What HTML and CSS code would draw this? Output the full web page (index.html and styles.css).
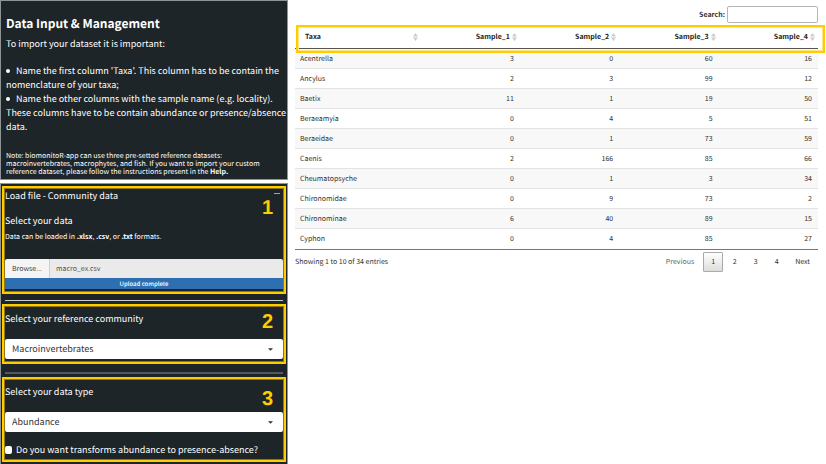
FILE: index.html
```html
<!DOCTYPE html>
<html lang="en">
<head>
<meta charset="utf-8">
<title>Data Input &amp; Management</title>
<link rel="stylesheet" href="styles.css">
</head>
<body>
<div class="page">
  <aside class="sidebar">
    <section class="box intro">
      <h1>Data Input &amp; Management</h1>
      <p class="lead">To import your dataset it is important:</p>
      <ul class="rules">
        <li>Name the first column 'Taxa'. This column has to be contain the<br>nomenclature of your taxa;</li>
        <li>Name the other columns with the sample name (e.g. locality).<br>These columns have to be contain abundance or presence/absence<br>data.</li>
      </ul>
      <p class="note">Note: biomonitoR-app can use three pre-setted reference datasets: macroinvertebrates, macrophytes, and fish. If you want to import your custom reference dataset, please follow the instructions present in the <b>Help.</b></p>
    </section>

    <form class="box steps">
      <section class="step">
        <span class="step-number">1</span>
        <div class="box-header">
          <h2>Load file - Community data</h2>
          <button type="button" class="collapse" aria-label="Collapse"></button>
        </div>
        <h2 class="sub">Select your data</h2>
        <p class="formats">Data can be loaded in <b>.xlsx</b>, <b>.csv</b>, or <b>.txt</b> formats.</p>
        <div class="upload">
          <label class="browse">Browse...<input type="file" class="file-input"></label>
          <input type="text" class="file-name" value="macro_ex.csv" readonly aria-label="Selected file">
        </div>
        <div class="progress" role="progressbar" aria-label="Upload" aria-valuenow="100">Upload complete</div>
      </section>
      <hr class="rule">
      <section class="step step-compact">
        <span class="step-number">2</span>
        <label class="field-label" for="community">Select your reference community</label>
        <div class="select-wrap">
          <select id="community"><option>Macroinvertebrates</option></select>
          <svg class="caret" viewBox="0 0 6 3" aria-hidden="true"><path d="M0 0h6L3 3z"/></svg>
        </div>
      </section>
      <hr class="rule rule-dim">
      <section class="step">
        <span class="step-number">3</span>
        <label class="field-label" for="datatype">Select your data type</label>
        <div class="select-wrap">
          <select id="datatype"><option>Abundance</option></select>
          <svg class="caret" viewBox="0 0 6 3" aria-hidden="true"><path d="M0 0h6L3 3z"/></svg>
        </div>
        <label class="check"><input type="checkbox">Do you want transforms abundance to presence-absence?</label>
      </section>
    </form>
  </aside>

  <main class="content">
    <div class="search">
      <label for="search">Search:</label>
      <input type="search" id="search">
    </div>
    <div class="table-wrap">
      <table>
        <thead>
          <tr>
            <th><span class="head">Taxa <svg class="sort" viewBox="0 0 5 8" aria-hidden="true"><path d="M0 3.500L2.500 0 5 3.500zM0 4.500h5L2.500 8z"/></svg></span></th>
            <th><span class="head">Sample_1 <svg class="sort" viewBox="0 0 5 8" aria-hidden="true"><path d="M0 3.500L2.500 0 5 3.500zM0 4.500h5L2.500 8z"/></svg></span></th>
            <th><span class="head">Sample_2 <svg class="sort" viewBox="0 0 5 8" aria-hidden="true"><path d="M0 3.500L2.500 0 5 3.500zM0 4.500h5L2.500 8z"/></svg></span></th>
            <th><span class="head">Sample_3 <svg class="sort" viewBox="0 0 5 8" aria-hidden="true"><path d="M0 3.500L2.500 0 5 3.500zM0 4.500h5L2.500 8z"/></svg></span></th>
            <th><span class="head">Sample_4 <svg class="sort" viewBox="0 0 5 8" aria-hidden="true"><path d="M0 3.500L2.500 0 5 3.500zM0 4.500h5L2.500 8z"/></svg></span></th>
          </tr>
        </thead>
        <tbody>
          <tr><td>Acentrella</td><td>3</td><td>0</td><td>60</td><td>16</td></tr>
          <tr><td>Ancylus</td><td>2</td><td>3</td><td>99</td><td>12</td></tr>
          <tr><td>Baetix</td><td>11</td><td>1</td><td>19</td><td>50</td></tr>
          <tr><td>Beraeamyia</td><td>0</td><td>4</td><td>5</td><td>51</td></tr>
          <tr><td>Beraeidae</td><td>0</td><td>1</td><td>73</td><td>59</td></tr>
          <tr><td>Caenis</td><td>2</td><td>166</td><td>85</td><td>66</td></tr>
          <tr><td>Cheumatopsyche</td><td>0</td><td>1</td><td>3</td><td>34</td></tr>
          <tr><td>Chironomidae</td><td>0</td><td>9</td><td>73</td><td>2</td></tr>
          <tr><td>Chironominae</td><td>6</td><td>40</td><td>89</td><td>15</td></tr>
          <tr><td>Cyphon</td><td>0</td><td>4</td><td>85</td><td>27</td></tr>
        </tbody>
      </table>
      <div class="head-highlight"></div>
    </div>
    <div class="table-footer">
      <span>Showing 1 to 10 of 34 entries</span>
      <nav class="pager" aria-label="Table pages">
        <button type="button" class="previous">Previous</button>
        <button type="button" class="current">1</button>
        <button type="button">2</button>
        <button type="button">3</button>
        <button type="button">4</button>
        <button type="button">Next</button>
      </nav>
    </div>
  </main>
</div>
</body>
</html>
```
FILE: styles.css
```css
* {
  box-sizing: border-box;
}

body {
  margin: 0;
  background: #fff;
  color: #333;
  font-family: "Noto Sans CJK SC", "Noto Sans", sans-serif;
  font-size: 7px;
  line-height: 12px;
  text-rendering: geometricPrecision;
}

h1, h2, p, ul {
  margin: 0;
  padding: 0;
}

input, select, button {
  font: inherit;
  color: inherit;
  text-rendering: inherit;
}

.page {
  display: grid;
  grid-template-columns: 286fr 523fr;
  gap: 8px;
  padding: 1px 8px 0 1px;
}

.sidebar {
  display: flex;
  flex-direction: column;
  gap: 5px;
  min-width: 0;
}

.box {
  background: #1e2528;
  color: #fff;
  box-shadow: 0 0 0 1px #8f9496;
}

.intro {
  padding: 15px 0 3px 5px;
}

h1 {
  font-size: 12px;
  line-height: 16px;
  font-weight: 700;
}

.lead {
  margin-top: 5px;
  font-size: 9px;
  line-height: 14px;
}

.rules {
  margin-top: 13px;
  font-size: 9px;
  line-height: 14px;
  list-style: none;
  white-space: nowrap;
}

.rules li::before {
  content: "";
  display: inline-block;
  width: 4px;
  height: 4px;
  margin-right: 6px;
  border-radius: 50%;
  background: #fff;
  vertical-align: 1px;
}

.note {
  margin-top: 18px;
  padding-right: 20px;
  line-height: 8px;
}

.steps {
  padding: 2px 1px;
}

.step {
  position: relative;
  padding: 0 1px 3px;
  border: 2px solid #fc0;
  outline: 1px solid #94780b;
  outline-offset: -3px;
}

.step-number {
  position: absolute;
  top: 8px;
  right: 11px;
  color: #fc0;
  font: 700 20px/24px "Liberation Sans", Arial, sans-serif;
}

.step-compact .step-number {
  top: 4px;
}

.box-header {
  display: flex;
  justify-content: space-between;
}

h2, .field-label {
  font-size: 9px;
  line-height: 14px;
  font-weight: 400;
}

.box-header h2 {
  padding-top: 1px;
}

.collapse {
  width: 6px;
  height: 1px;
  margin: 5px 3px 0 0;
  padding: 0;
  border: 0;
  background: #9aa3a8;
}

.sub {
  margin-top: 11px;
}

.formats {
  margin-top: 3px;
}

.upload {
  display: flex;
  height: 19px;
  margin-top: 16px;
}

.browse {
  position: relative;
  flex: none;
  padding: 0 7px;
  border-right: 1px solid #ccd;
  border-radius: 2px 0 0 0;
  background: #f4f4f4;
  color: #444;
  line-height: 20px;
}

.file-input {
  position: absolute;
  inset: 0;
  width: 100%;
  opacity: 0;
}

.file-name {
  flex: 1;
  min-width: 0;
  padding: 0 6px;
  border: 0;
  border-radius: 0 2px 0 0;
  background: #eaeaea;
  color: #555;
}

.progress {
  background: #2d6fb0;
  font-size: 6px;
  line-height: 11px;
  font-weight: 500;
  text-align: center;
}

.rule {
  height: 1px;
  margin: 6px 3px 3px;
  border: 0;
  background: #c9cccd;
}

.rule-dim {
  height: 2px;
  margin: 8px 3px 3px;
  background: #55595b;
}

.field-label {
  display: block;
  padding-top: 6px;
}

.select-wrap {
  position: relative;
  margin-top: 13px;
}

select {
  display: block;
  width: 100%;
  height: 20px;
  padding: 0 7px;
  border: 0;
  border-radius: 2px;
  background: #fff;
  color: #333;
  font-size: 9px;
  appearance: none;
}

.caret {
  position: absolute;
  top: 9px;
  right: 10px;
  width: 5px;
  height: 3px;
  fill: #333;
}

.check {
  display: flex;
  align-items: center;
  gap: 4px;
  margin-top: 11px;
  font-size: 9px;
  line-height: 14px;
}

.check input {
  appearance: none;
  width: 7px;
  height: 8px;
  margin: 0;
  border-radius: 2px;
  background: #fff;
}

.content {
  min-width: 0;
  padding-top: 5px;
}

.search {
  display: flex;
  justify-content: flex-end;
  align-items: center;
  gap: 2px;
  font-weight: 700;
}

.search input {
  width: 91px;
  height: 17px;
  padding: 0 3px;
  border: 1px solid #b5b5b5;
  border-radius: 2px;
  background: #fff;
}

.table-wrap {
  position: relative;
  margin-top: 2px;
}

table {
  width: 100%;
  table-layout: fixed;
  border-collapse: separate;
  border-spacing: 0;
  border-bottom: 1px solid #777;
}

th, td {
  padding: 0 6px 0 5px;
  text-align: right;
}

th {
  width: 19%;
  height: 24px;
  padding: 1px 3px 0 10px;
  border-bottom: 1px solid #555;
  color: #222;
  font-weight: 700;
}

th:first-child {
  width: 24%;
}

td:first-child {
  text-align: left;
}

td {
  height: 20px;
  border-bottom: 1px solid #e3e3e3;
}

tbody tr:nth-child(odd) {
  background: #f8f8f8;
}

tbody tr:last-child td {
  border-bottom: 0;
}

.head {
  display: flex;
  justify-content: flex-end;
  align-items: center;
  gap: 2px;
}

th:first-child .head {
  justify-content: space-between;
}

.sort {
  width: 5px;
  height: 8px;
  fill: #ccc;
}

.head-highlight {
  position: absolute;
  top: 0;
  left: 1px;
  right: -7px;
  height: 28px;
  border: 2px solid #fc0;
  outline: 1px solid #ffe680;
  outline-offset: -3px;
  pointer-events: none;
}

.table-footer {
  display: flex;
  justify-content: space-between;
  align-items: flex-start;
  padding-top: 2px;
}

.table-footer > span {
  padding-top: 4px;
}

.pager {
  display: flex;
  gap: 2px;
  padding-right: 1px;
}

.pager button {
  min-width: 19px;
  height: 20px;
  padding: 0 7px;
  border: 0;
  background: none;
}

.pager .previous {
  color: #666;
}

.pager .current {
  min-width: 20px;
  border: 1px solid #aaa;
  border-radius: 1px;
  background: linear-gradient(#fff, #dcdcdc);
}
```
